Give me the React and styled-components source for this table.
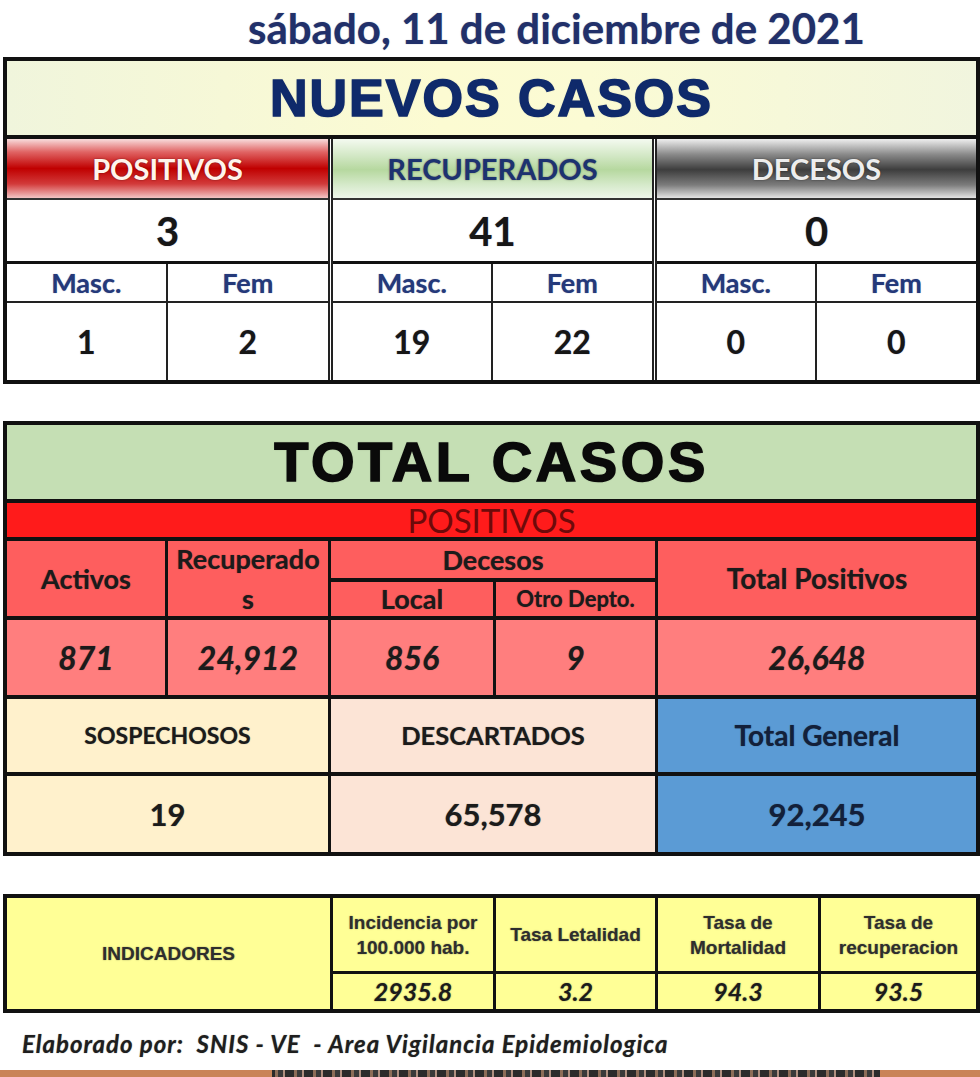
import React from 'react';
import styled, { createGlobalStyle } from 'styled-components';

const GlobalStyle = createGlobalStyle`
  html, body {
    margin: 0;
    padding: 0;
    background: #fff;
  }
  body {
    width: 980px;
    overflow: hidden;
    font-family: Lato, "Open Sans", sans-serif;
  }
  * { box-sizing: border-box; }
`;

const Page = styled.div`
  width: 980px;
  height: 1077px;
  overflow: hidden;
  display: flex;
  flex-direction: column;
`;

const DateTitle = styled.h1`
  margin: 0;
  height: 57px;
  padding-left: 248px;
  font: 700 42px/57px Lato, sans-serif;
  color: #21306a;
  text-shadow: 0 0 1px rgba(20, 30, 80, 0.5);
  white-space: nowrap;
`;

const Table = styled.section`
  margin-left: 3px;
  margin-top: ${p => p.$top || 0}px;
  width: 977px;
  border: 4px solid #111;
  background: #111;
`;

const BigTitle = styled.div`
  height: 78px;
  border-bottom: 4px solid #111;
  background: ${p => p.$bg};
  display: flex;
  align-items: center;
  justify-content: center;
  font: 700 ${p => p.$size}px/1 "Liberation Sans", Arial, sans-serif;
  letter-spacing: ${p => p.$spacing}px;
  color: ${p => p.$color};
  -webkit-text-stroke: 1.6px ${p => p.$color};
  text-shadow: 0 0 2px rgba(0, 0, 0, 0.35);
`;

/* ---------- nuevos casos ---------- */

const CatRow = styled.div`
  display: grid;
  grid-template-columns: 321px 324px 1fr;
  background: #fff;
`;

const CatCol = styled.div`
  display: flex;
  flex-direction: column;
  border-left: ${p => (p.$first ? 'none' : '5px double #222')};
`;

const catBg = {
  red: 'linear-gradient(#f8dcdc 0%, #e06464 22%, #c00000 50%, #d23a3a 76%, #f3c4c4 100%)',
  green: 'linear-gradient(#f4faf0 0%, #d3e8c6 28%, #b6d89f 52%, #d6eacb 78%, #eef6ea 100%)',
  gray: 'linear-gradient(#eeeeee 0%, #8a8a8a 26%, #3d3d3d 52%, #7c7c7c 78%, #e4e4e4 100%)',
};

const catColor = {
  red: '#fff4ec',
  green: '#1d3270',
  gray: '#ededed',
};

const CatHead = styled.div`
  height: 61px;
  border-bottom: 2px solid #333;
  background: ${p => catBg[p.$tone]};
  display: flex;
  align-items: center;
  justify-content: center;
  font: 700 29px/1 Lato, sans-serif;
  color: ${p => catColor[p.$tone]};
  text-shadow: 0 0 2px rgba(0, 0, 0, 0.45);
`;

const CatTotal = styled.div`
  height: 64px;
  border-bottom: 3px solid #111;
  display: flex;
  align-items: center;
  justify-content: center;
  font: 700 40px/1 Lato, sans-serif;
  color: #161616;
  text-shadow: 0 0 1px rgba(30, 40, 110, 0.6);
`;

const SubGrid = styled.div`
  display: grid;
  grid-template-columns: 1fr 1fr;
  grid-template-rows: 39px 77px;
  background: #fff;
`;

const SubCell = styled.div`
  display: flex;
  align-items: center;
  justify-content: center;
  border-bottom: ${p => (p.$head ? '2px solid #222' : 'none')};
  border-right: ${p => (p.$left ? '2px solid #222' : 'none')};
  font: 700 ${p => (p.$head ? 27 : 32)}px/1 Lato, sans-serif;
  color: ${p => (p.$head ? '#24397a' : '#161616')};
  text-shadow: 0 0 1px rgba(30, 40, 110, 0.6);
`;

/* ---------- total casos ---------- */

const PosBar = styled.div`
  height: 38px;
  border-bottom: 4px solid #111;
  background: #ff1b1b;
  display: flex;
  align-items: center;
  justify-content: center;
  font: 400 33px/34px Lato, sans-serif;
  color: #6e0a0a;
`;

const TotalGrid = styled.div`
  display: grid;
  grid-template-columns: 158px 160px 162px 159px 1fr;
  grid-template-rows: 37px 34px 75px 73px 76px;
  gap: 4px 3px;
  background: #111;
`;

const Cell = styled.div`
  grid-area: ${p => p.$area};
  background: ${p => p.$bg};
  display: flex;
  align-items: center;
  justify-content: center;
  text-align: center;
  font-family: Lato, sans-serif;
  font-weight: 700;
  font-size: ${p => p.$size}px;
  font-style: ${p => (p.$italic ? 'italic' : 'normal')};
  line-height: ${p => p.$lh || 1.1};
  color: ${p => p.$color || '#1b1b1b'};
  text-shadow: 0 0 1px rgba(0, 0, 0, 0.5);
  white-space: nowrap;
`;

/* ---------- indicadores ---------- */

const IndGrid = styled.div`
  display: grid;
  grid-template-columns: 323px 160px 159px 160px 1fr;
  grid-template-rows: 73px 35px;
  gap: 3px 3px;
  background: #111;
`;

const IndCell = styled.div`
  grid-area: ${p => p.$area};
  background: #ffff96;
  display: flex;
  align-items: center;
  justify-content: center;
  text-align: center;
  font: ${p => (p.$value ? 'italic 700 25px/1 Lato' : '700 19px/25px "Liberation Sans", Arial')}, sans-serif;
  color: ${p => (p.$value ? '#1b1b1b' : '#2e2e2e')};
  text-shadow: 0 0 1.5px rgba(0, 0, 0, 0.45);
  white-space: nowrap;
`;

const Footer = styled.p`
  margin: 0;
  height: 57px;
  padding: 19px 0 0 22px;
  font: italic 700 24px/24px Lato, sans-serif;
  letter-spacing: 1px;
  color: #1e1e1e;
  white-space: pre;
  text-shadow: 0 0 1px rgba(0, 0, 0, 0.5);
`;

const BottomRule = styled.div`
  height: 7px;
  background: linear-gradient(
    to right,
    #c98458 0 272px,
    transparent 272px 880px,
    #c98458 880px
  ),
  repeating-linear-gradient(to right, #2b2b2b 0 9px, #8d6d58 9px 12px, #3a3a3a 12px 17px, #b09080 17px 19px);
`;

const nuevos = [
  { tone: 'red', label: 'POSITIVOS', total: '3', masc: '1', fem: '2' },
  { tone: 'green', label: 'RECUPERADOS', total: '41', masc: '19', fem: '22' },
  { tone: 'gray', label: 'DECESOS', total: '0', masc: '0', fem: '0' },
];

const indicadores = [
  { label: ['Incidencia por', '100.000 hab.'], value: '2935.8' },
  { label: ['Tasa Letalidad'], value: '3.2' },
  { label: ['Tasa de', 'Mortalidad'], value: '94.3' },
  { label: ['Tasa de', 'recuperacion'], value: '93.5' },
];

const HEAD = '#fe5e5e';
const VAL = '#ff7e7e';

const App = () => {
  return (
    <>
      <GlobalStyle />
      <Page>
        <DateTitle>sábado, 11 de diciembre de 2021</DateTitle>

        <Table>
          <BigTitle $bg="linear-gradient(to right, #f0f5dc, #fcfbd2 45%, #fbfbd4 60%, #f1f5de)" $color="#0f2a6b" $size={52} $spacing={2}>
            NUEVOS CASOS
          </BigTitle>
          <CatRow>
            {nuevos.map((c, i) => (
              <CatCol key={c.label} $first={i === 0}>
                <CatHead $tone={c.tone}>{c.label}</CatHead>
                <CatTotal>{c.total}</CatTotal>
                <SubGrid>
                  <SubCell $head $left>Masc.</SubCell>
                  <SubCell $head>Fem</SubCell>
                  <SubCell $left>{c.masc}</SubCell>
                  <SubCell>{c.fem}</SubCell>
                </SubGrid>
              </CatCol>
            ))}
          </CatRow>
        </Table>

        <Table $top={37}>
          <BigTitle $bg="#c5dfb4" $color="#0a0a0a" $size={56} $spacing={3.6}>
            TOTAL CASOS
          </BigTitle>
          <PosBar>POSITIVOS</PosBar>
          <TotalGrid>
            <Cell $area="1 / 1 / 3 / 2" $bg={HEAD} $size={27}>Activos</Cell>
            <Cell $area="1 / 2 / 3 / 3" $bg={HEAD} $size={27} $lh={1.45}>Recuperado<br />s</Cell>
            <Cell $area="1 / 3 / 2 / 5" $bg={HEAD} $size={27}>Decesos</Cell>
            <Cell $area="1 / 5 / 3 / 6" $bg={HEAD} $size={28}>Total Positivos</Cell>
            <Cell $area="2 / 3 / 3 / 4" $bg={HEAD} $size={27}>Local</Cell>
            <Cell $area="2 / 4 / 3 / 5" $bg={HEAD} $size={22}>Otro Depto.</Cell>

            <Cell $area="3 / 1 / 4 / 2" $bg={VAL} $size={32} $italic>871</Cell>
            <Cell $area="3 / 2 / 4 / 3" $bg={VAL} $size={32} $italic>24,912</Cell>
            <Cell $area="3 / 3 / 4 / 4" $bg={VAL} $size={32} $italic>856</Cell>
            <Cell $area="3 / 4 / 4 / 5" $bg={VAL} $size={32} $italic>9</Cell>
            <Cell $area="3 / 5 / 4 / 6" $bg={VAL} $size={32} $italic>26,648</Cell>

            <Cell $area="4 / 1 / 5 / 3" $bg="#fff1cc" $size={23}>SOSPECHOSOS</Cell>
            <Cell $area="4 / 3 / 5 / 5" $bg="#fce4d6" $size={25.5}>DESCARTADOS</Cell>
            <Cell $area="4 / 5 / 5 / 6" $bg="#5b9bd5" $size={28} $color="#13203a">Total General</Cell>

            <Cell $area="5 / 1 / 6 / 3" $bg="#fff1cc" $size={31}>19</Cell>
            <Cell $area="5 / 3 / 6 / 5" $bg="#fce4d6" $size={31}>65,578</Cell>
            <Cell $area="5 / 5 / 6 / 6" $bg="#5b9bd5" $size={31} $color="#13203a">92,245</Cell>
          </TotalGrid>
        </Table>

        <Table $top={38}>
          <IndGrid>
            <IndCell $area="1 / 1 / 3 / 2">INDICADORES</IndCell>
            {indicadores.map((ind, i) => (
              <IndCell key={ind.value} $area={`1 / ${i + 2} / 2 / ${i + 3}`}>
                <span>
                  {ind.label.map((l, j) => (
                    <React.Fragment key={l}>
                      {j > 0 && <br />}
                      {l}
                    </React.Fragment>
                  ))}
                </span>
              </IndCell>
            ))}
            {indicadores.map((ind, i) => (
              <IndCell key={'v' + ind.value} $area={`2 / ${i + 2} / 3 / ${i + 3}`} $value>
                {ind.value}
              </IndCell>
            ))}
          </IndGrid>
        </Table>

        <Footer>{'Elaborado por:  SNIS - VE  - Area Vigilancia Epidemiologica'}</Footer>
        <BottomRule />
      </Page>
    </>
  );
};

export default App;
